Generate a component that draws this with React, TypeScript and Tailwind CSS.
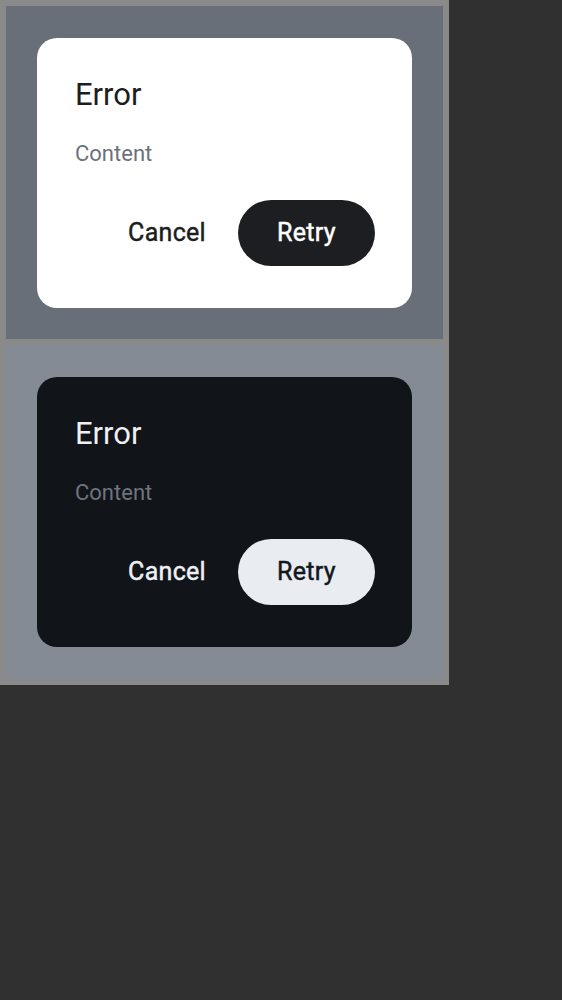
import React from "react";

function Dialog({ dark }: { dark: boolean }) {
  return (
    <div
      className={
        dark
          ? "w-[375px] h-[270px] rounded-[20px] bg-[#111418] pl-[38px] pr-[37px] pt-[39px] flex flex-col"
          : "w-[375px] h-[270px] rounded-[20px] bg-white pl-[38px] pr-[37px] pt-[39px] flex flex-col"
      }
    >
      <div
        className={
          dark
            ? "text-[31px] leading-[36px] text-[#eef0f3]"
            : "text-[31px] leading-[36px] text-[#1c1d21]"
        }
      >
        Error
      </div>
      <div
        className={
          dark
            ? "mt-[27px] text-[22px] leading-[28px] text-[#6f7580]"
            : "mt-[27px] text-[22px] leading-[28px] text-[#6b717b]"
        }
      >
        Content
      </div>
      <div className="mt-[32px] flex justify-end items-center">
        <div
          className={
            dark
              ? "mr-[32px] text-[25px] leading-[30px] tracking-[0.3px] [-webkit-text-stroke:0.45px_currentColor] text-[#eef0f3]"
              : "mr-[32px] text-[25px] leading-[30px] tracking-[0.3px] [-webkit-text-stroke:0.45px_currentColor] text-[#1c1d21]"
          }
        >
          Cancel
        </div>
        <div
          className={
            dark
              ? "w-[137px] h-[66px] rounded-full bg-[#e9ecf1] flex items-center justify-center text-[25px] tracking-[0.3px] [-webkit-text-stroke:0.45px_currentColor] text-[#14171b]"
              : "w-[137px] h-[66px] rounded-full bg-[#1d1e22] flex items-center justify-center text-[25px] tracking-[0.3px] [-webkit-text-stroke:0.45px_currentColor] text-white"
          }
        >
          Retry
        </div>
      </div>
    </div>
  );
}

export default function App() {
  return (
    <div
      className="min-h-[1000px] w-full bg-[#303030]"
      style={{ fontFamily: "Roboto, 'Noto Sans', sans-serif" }}
    >
      <div className="w-[449px] bg-[#8a8a8a] p-[6px] flex flex-col gap-[6px]">
        <div className="h-[333px] bg-[#686f79] pl-[31px] pt-[32px]">
          <Dialog dark={false} />
        </div>
        <div className="h-[334px] bg-[#858b95] pl-[31px] pt-[32px]">
          <Dialog dark={true} />
        </div>
      </div>
    </div>
  );
}
